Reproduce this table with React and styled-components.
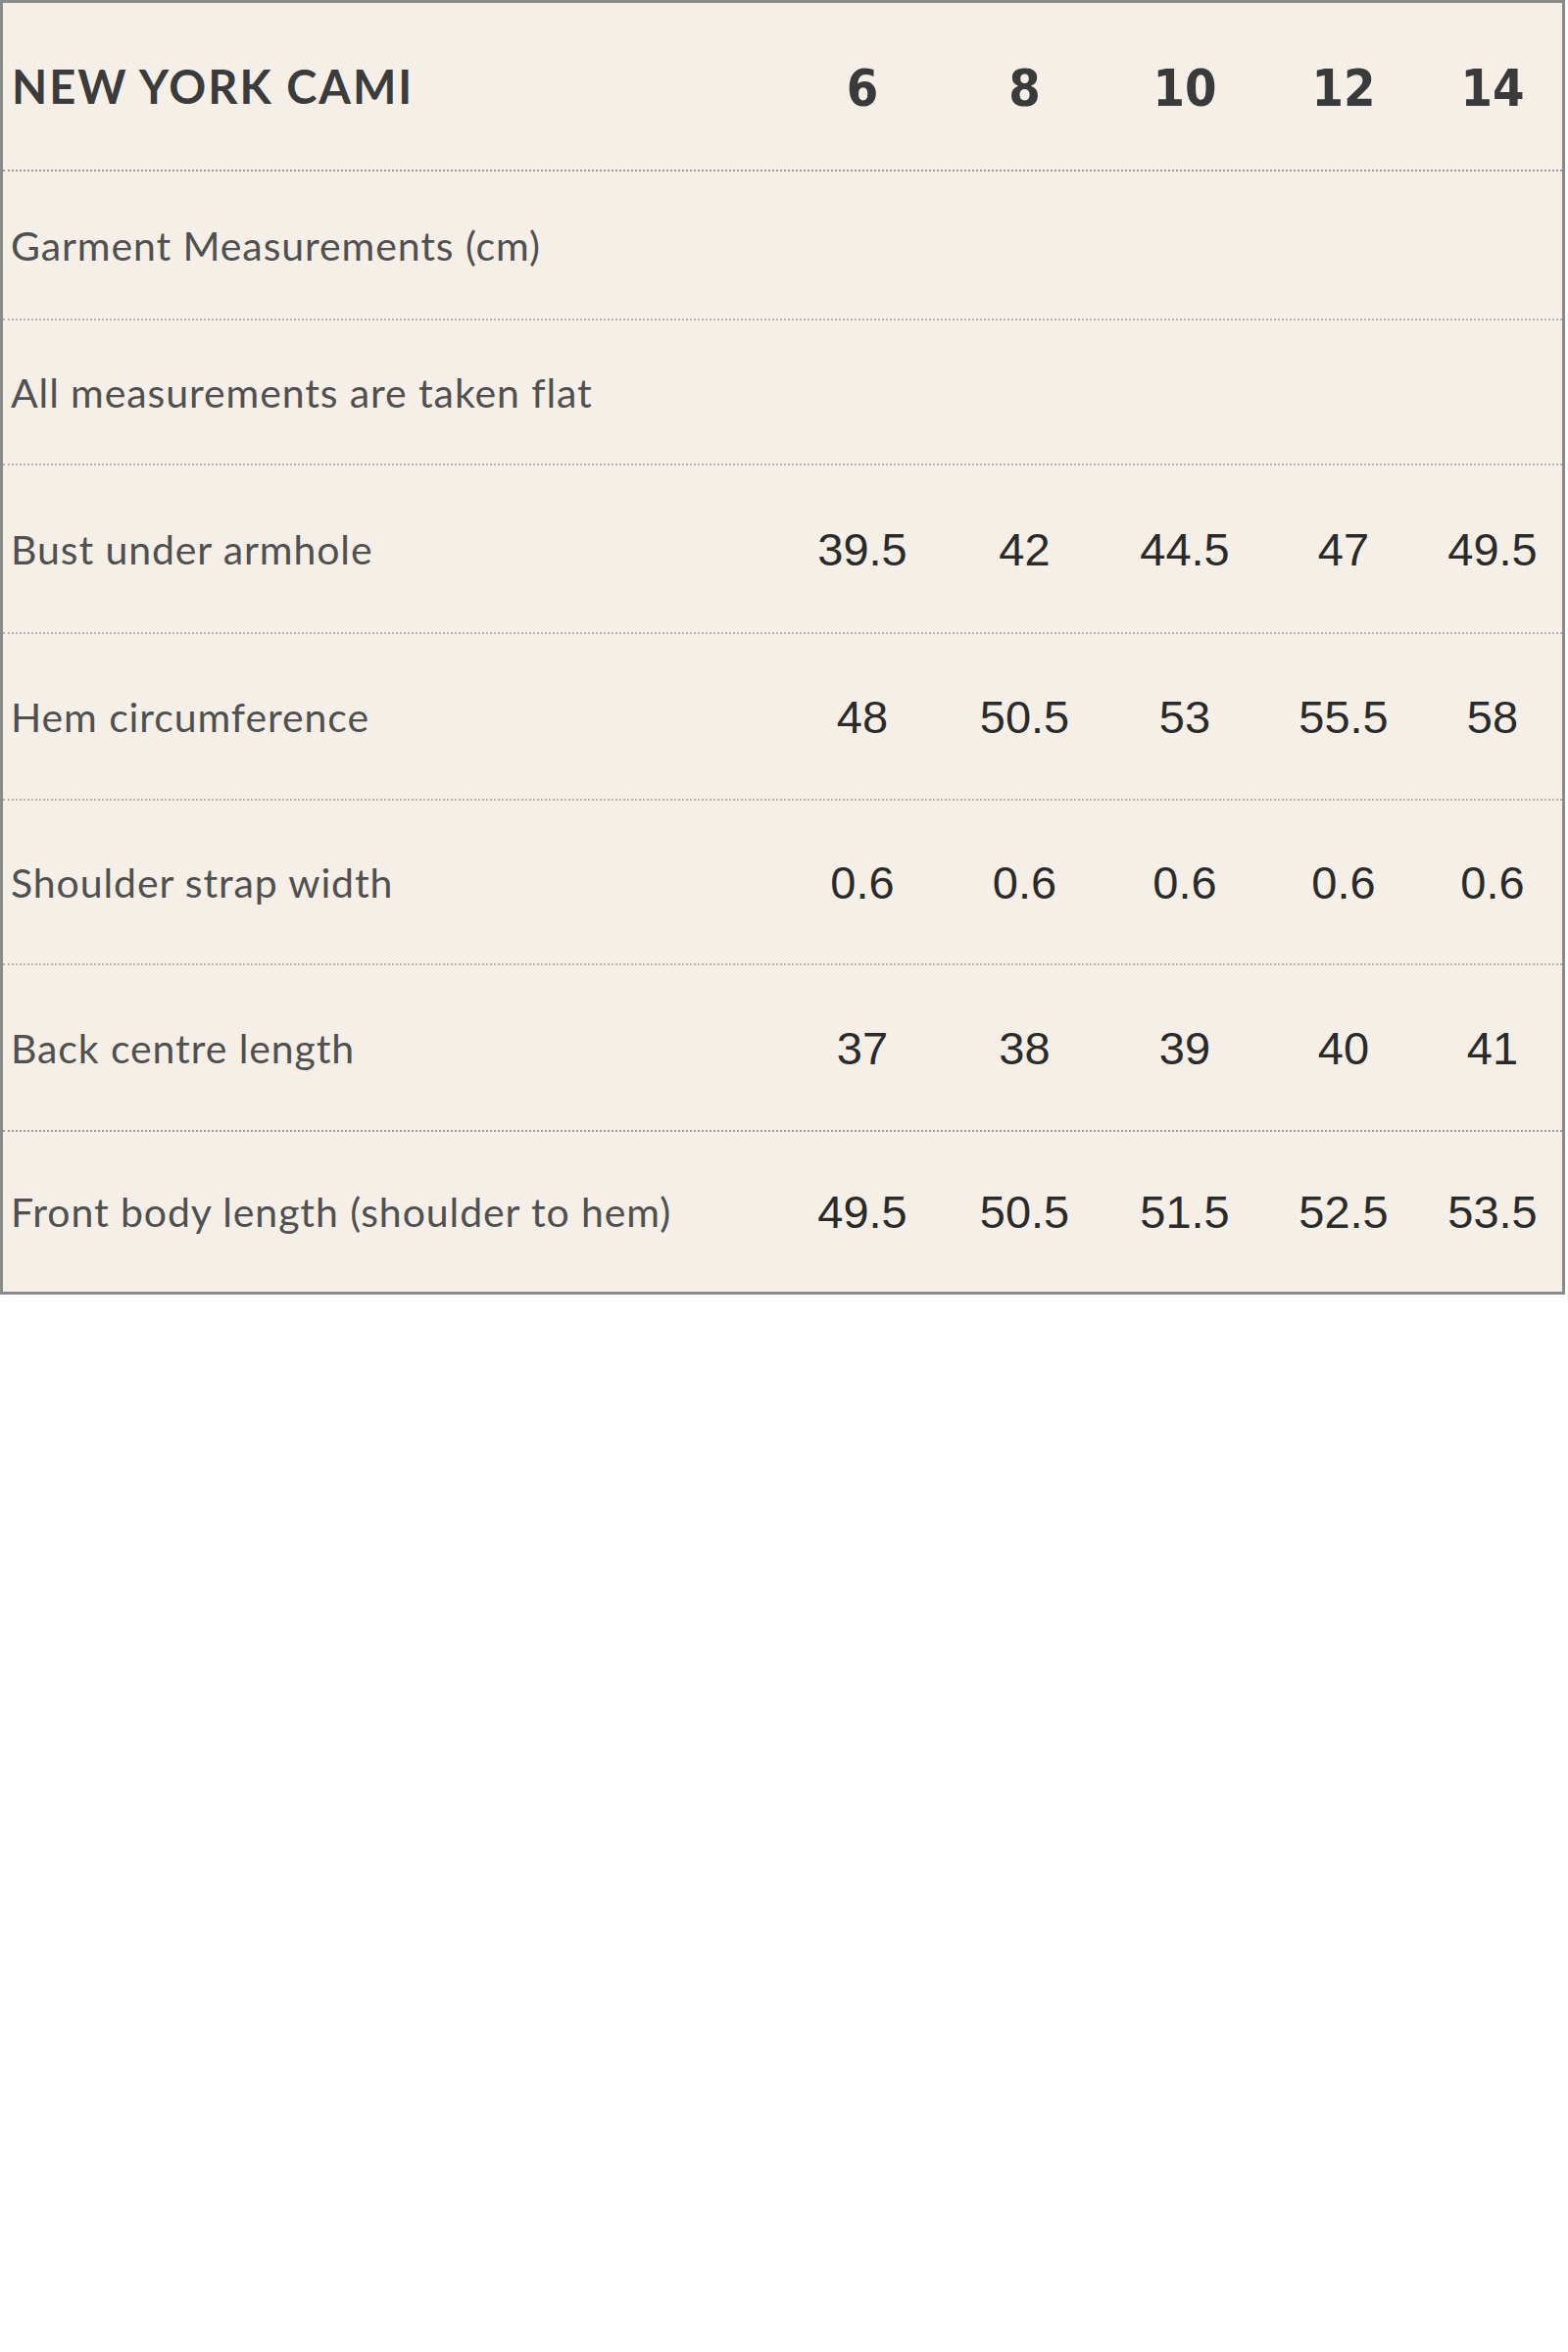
import React from "react";
import styled, { createGlobalStyle } from "styled-components";

const rows = [
  { label: "Bust under armhole", values: ["39.5", "42", "44.5", "47", "49.5"], h: 172 },
  { label: "Hem circumference", values: ["48", "50.5", "53", "55.5", "58"], h: 170 },
  { label: "Shoulder strap width", values: ["0.6", "0.6", "0.6", "0.6", "0.6"], h: 168 },
  { label: "Back centre length", values: ["37", "38", "39", "40", "41"], h: 170, dense: true },
  { label: "Front body length (shoulder to hem)", values: ["49.5", "50.5", "51.5", "52.5", "53.5"], h: 163, last: true },
];

const sizes = ["6", "8", "10", "12", "14"];

export default function App() {
  return (
    <>
      <GlobalStyle />
      <Chart>
        <Row $h={172} $dense>
          <Title>NEW YORK CAMI</Title>
          {sizes.map((s) => (
            <SizeHead key={s}>{s}</SizeHead>
          ))}
        </Row>
        <Row $h={152}>
          <Label>Garment Measurements (cm)</Label>
        </Row>
        <Row $h={148}>
          <Label>All measurements are taken flat</Label>
        </Row>
        {rows.map((r) => (
          <Row key={r.label} $h={r.h} $dense={r.dense} $last={r.last}>
            <Label>{r.label}</Label>
            {r.values.map((v, i) => (
              <Value key={i}>{v}</Value>
            ))}
          </Row>
        ))}
      </Chart>
    </>
  );
}

const GlobalStyle = createGlobalStyle`
  body {
    margin: 0;
    background: #ffffff;
    font-family: "Lato", "Liberation Sans", sans-serif;
  }
`;

const Chart = styled.div`
  box-sizing: border-box;
  width: 1597px;
  border: 3px solid #8a8a8a;
  background: #f6efe7;
`;

const Row = styled.div`
  box-sizing: border-box;
  display: grid;
  grid-template-columns: 794px 166px 165px 162px 162px 1fr;
  align-items: center;
  height: ${(p) => p.$h}px;
  border-bottom: ${(p) =>
    p.$last ? "none" : p.$dense ? "2px dotted #9a9a9a" : "2px dotted #b0b0b0"};
`;

const Title = styled.div`
  padding-left: 9px;
  font-family: "Lato", sans-serif;
  font-weight: 700;
  font-size: 47px;
  letter-spacing: 2px;
  color: #3b3b3b;
`;

const Label = styled.div`
  padding-left: 8px;
  font-family: "Lato", sans-serif;
  font-weight: 400;
  font-size: 41px;
  letter-spacing: 0.9px;
  color: #505050;
  white-space: nowrap;
`;

const SizeHead = styled.div`
  text-align: center;
  padding-top: 4px;
  font-family: "Liberation Sans Narrow", "DejaVu Sans Condensed", sans-serif;
  font-weight: 700;
  font-size: 52px;
  color: #3a3a3a;
`;

const Value = styled.div`
  text-align: center;
  font-family: "Liberation Sans", sans-serif;
  font-weight: 400;
  font-size: 47px;
  color: #2a2a2a;
`;
